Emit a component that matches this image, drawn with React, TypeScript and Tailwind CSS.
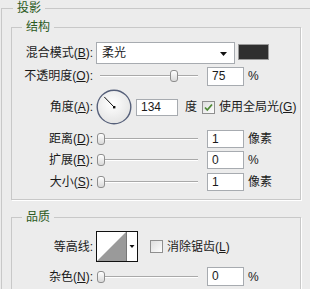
import React from "react";

function K({ k }: { k: string }) {
  return (
    <>
      (<span className="underline">{k}</span>)
    </>
  );
}

function Label({ text, k }: { text: string; k?: string }) {
  return (
    <div className="w-[81px] shrink-0 text-right whitespace-nowrap">
      {text}
      {k ? <K k={k} /> : null}:
    </div>
  );
}

function Slider({ pos }: { pos: number }) {
  return (
    <div className="relative ml-[3px] h-[14px] w-[106px] shrink-0">
      <div className="absolute left-[4px] right-[4px] top-[6px] h-[2px] border-t border-t-[#a9a9a9] border-b border-b-white" />
      <div
        className="absolute top-[1px] h-[12px] w-[8px] rounded-[3px] border border-[#8e8e8e] bg-gradient-to-b from-white to-[#d9d9d9]"
        style={{ left: pos }}
      />
    </div>
  );
}

function Num({ v, w = 37, h = 18, ml = 5 }: { v: string; w?: number; h?: number; ml?: number }) {
  return (
    <div
      className="shrink-0 border border-[#a7abb0] bg-white pl-[4px]"
      style={{ width: w, height: h, marginLeft: ml, lineHeight: `${h - 2}px` }}
    >
      {v}
    </div>
  );
}

function Check({ checked }: { checked?: boolean }) {
  return (
    <svg width="13" height="13" viewBox="0 0 13 13" className="shrink-0">
      <defs>
        <linearGradient id="cbg" x1="0" y1="0" x2="1" y2="1">
          <stop offset="0" stopColor="#dcdcdc" />
          <stop offset="1" stopColor="#ffffff" />
        </linearGradient>
      </defs>
      <rect x="0.5" y="0.5" width="12" height="12" fill="url(#cbg)" stroke="#8f8f8f" />
      {checked ? (
        <path d="M3 6.5 L5.3 9 L10 3.5" fill="none" stroke="#4f8a36" strokeWidth="1.8" />
      ) : null}
    </svg>
  );
}

function Dial() {
  const a = (134 * Math.PI) / 180;
  const cx = 18;
  const cy = 18;
  const ex = cx + Math.cos(a) * 14;
  const ey = cy - Math.sin(a) * 14;
  return (
    <svg width="36" height="36" viewBox="0 0 36 36" className="ml-[3px] shrink-0">
      <defs>
        <radialGradient id="dg" cx="0.45" cy="0.4" r="0.6">
          <stop offset="0" stopColor="#ffffff" />
          <stop offset="1" stopColor="#e4e4e4" />
        </radialGradient>
      </defs>
      <circle cx={cx} cy={cy} r="16.8" fill="url(#dg)" stroke="#56607a" strokeWidth="1.4" />
      <line x1={cx} y1={cy} x2={ex} y2={ey} stroke="#111" strokeWidth="1" />
      <rect x={cx - 1} y={cy - 1} width="2.4" height="2.4" fill="#111" />
    </svg>
  );
}

function Contour() {
  return (
    <svg width="42" height="31" viewBox="0 0 42 31" className="ml-[3px] shrink-0">
      <rect x="0.5" y="0.5" width="41" height="30" fill="#fff" stroke="#111" />
      <polygon points="1,30 30,1 30,30" fill="#9a9a9a" />
      <line x1="30.5" y1="1" x2="30.5" y2="30" stroke="#777" />
      <polygon points="33.5,14 38.5,14 36,17" fill="#111" />
    </svg>
  );
}

const legend = "px-[4px] leading-[13px] text-[#2b5a22] text-[12px]";

export default function App() {
  return (
    <div className="h-[289px] w-[310px] overflow-hidden bg-[#ececec] pt-[2px] font-['Liberation_Sans','Noto_Sans_CJK_SC',sans-serif] text-[12px] leading-[14px] text-[#1a1a1a]">
      <fieldset className="ml-[1px] w-[330px] border border-[#c8c8c8] p-0 pb-[20px] shadow-[1px_1px_0_#ffffff]">
        <legend className={"ml-[11px] " + legend}>投影</legend>

        <fieldset className="ml-[9px] mt-[6px] w-[290px] border border-[#c8c8c8] p-0 pb-[8px] shadow-[1px_1px_0_#ffffff]">
          <legend className={"ml-[10px] " + legend}>结构</legend>

          <div className="mt-[8px] flex h-[22px] items-center">
            <Label text="混合模式" k="B" />
            <div className="relative ml-[3px] flex h-[22px] w-[139px] shrink-0 items-center border border-[#a7abb0] bg-white pl-[5px]">
              柔光
              <svg width="8" height="5" viewBox="0 0 8 5" className="absolute right-[6px] top-[9px]">
                <polygon points="0,0 7,0 3.5,4" fill="#111" />
              </svg>
            </div>
            <div className="ml-[3px] mb-[3px] h-[16px] w-[31px] shrink-0 border border-[#9a9a9a] bg-[#2f2f2f]" />
          </div>

          <div className="mt-[2px] flex h-[20px] items-center">
            <Label text="不透明度" k="O" />
            <Slider pos={74} />
            <Num v="75" h={19} />
            <div className="ml-[4px]">%</div>
          </div>

          <div className="mt-[3px] flex h-[36px] items-center">
            <Label text="角度" k="A" />
            <Dial />
            <Num v="134" w={42} h={17} ml={4} />
            <div className="ml-[7px]">度</div>
            <div className="ml-[5px] flex items-center">
              <Check checked />
              <div className="ml-[4px] whitespace-nowrap">
                使用全局光
                <K k="G" />
              </div>
            </div>
          </div>

          <div className="mt-[5px] flex h-[18px] items-center">
            <Label text="距离" k="D" />
            <Slider pos={1} />
            <Num v="1" />
            <div className="ml-[4px]">像素</div>
          </div>

          <div className="mt-[3px] flex h-[18px] items-center">
            <Label text="扩展" k="R" />
            <Slider pos={1} />
            <Num v="0" />
            <div className="ml-[4px]">%</div>
          </div>

          <div className="mt-[4px] flex h-[18px] items-center">
            <Label text="大小" k="S" />
            <Slider pos={1} />
            <Num v="1" />
            <div className="ml-[4px]">像素</div>
          </div>
        </fieldset>

        <fieldset className="ml-[9px] mt-[11px] w-[290px] border border-[#c8c8c8] p-0 pb-[20px] shadow-[1px_1px_0_#ffffff]">
          <legend className={"ml-[10px] " + legend}>品质</legend>

          <div className="mt-[7px] flex h-[31px] items-center">
            <Label text="等高线" />
            <Contour />
            <div className="ml-[12px] flex items-center">
              <Check />
              <div className="ml-[4px] whitespace-nowrap">
                消除锯齿
                <K k="L" />
              </div>
            </div>
          </div>

          <div className="mt-[5px] flex h-[19px] items-center">
            <Label text="杂色" k="N" />
            <Slider pos={1} />
            <Num v="0" h={19} />
            <div className="ml-[4px]">%</div>
          </div>
        </fieldset>
      </fieldset>
    </div>
  );
}
